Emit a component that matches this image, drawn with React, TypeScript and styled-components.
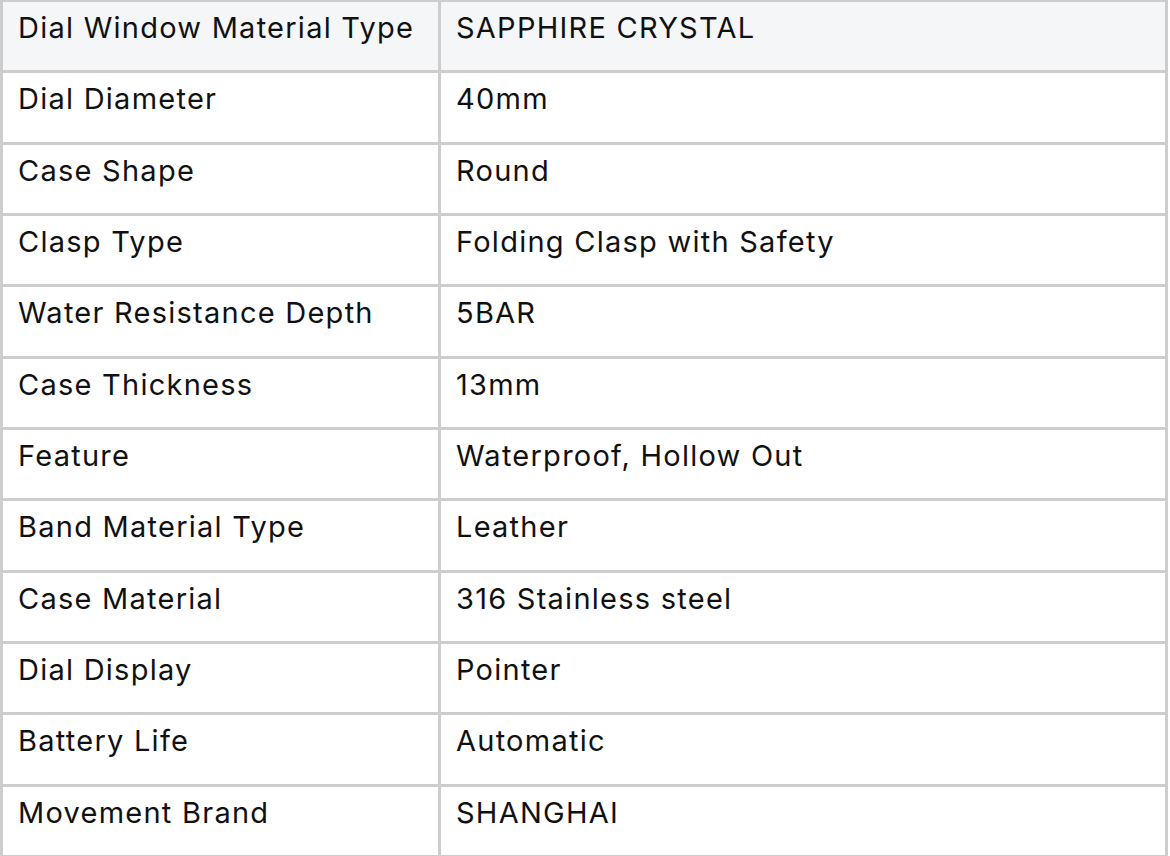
import React from "react";
import styled, { createGlobalStyle } from "styled-components";

const GlobalStyle = createGlobalStyle`
  html, body {
    margin: 0;
    padding: 0;
    background: #ffffff;
  }
  * { box-sizing: border-box; }
`;

const Table = styled.div`
  width: 1168px;
  height: 856px;
  display: grid;
  grid-template-columns: 435px 1fr;
  grid-auto-rows: 1fr;
  column-gap: 3px;
  row-gap: 3px;
  padding: 2px 3px 1px 3px;
  background: #cdcdcd;
  font-family: Inter, "Liberation Sans", sans-serif;
  font-size: 29px;
  line-height: 35px;
  letter-spacing: 1.25px;
  color: #111111;
`;

const Cell = styled.div<{ $head?: boolean }>`
  background: ${(p) => (p.$head ? "#f5f6f8" : "#ffffff")};
  padding: 8px 15px 0 15px;
  white-space: nowrap;
  overflow: hidden;
`;

const rows: [string, string][] = [
  ["Dial Window Material Type", "SAPPHIRE CRYSTAL"],
  ["Dial Diameter", "40mm"],
  ["Case Shape", "Round"],
  ["Clasp Type", "Folding Clasp with Safety"],
  ["Water Resistance Depth", "5BAR"],
  ["Case Thickness", "13mm"],
  ["Feature", "Waterproof, Hollow Out"],
  ["Band Material Type", "Leather"],
  ["Case Material", "316 Stainless steel"],
  ["Dial Display", "Pointer"],
  ["Battery Life", "Automatic"],
  ["Movement Brand", "SHANGHAI"],
];

export default function App() {
  return (
    <>
      <GlobalStyle />
      <Table>
        {rows.map(([k, v], i) => (
          <React.Fragment key={k}>
            <Cell $head={i === 0}>{k}</Cell>
            <Cell $head={i === 0}>{v}</Cell>
          </React.Fragment>
        ))}
      </Table>
    </>
  );
}
